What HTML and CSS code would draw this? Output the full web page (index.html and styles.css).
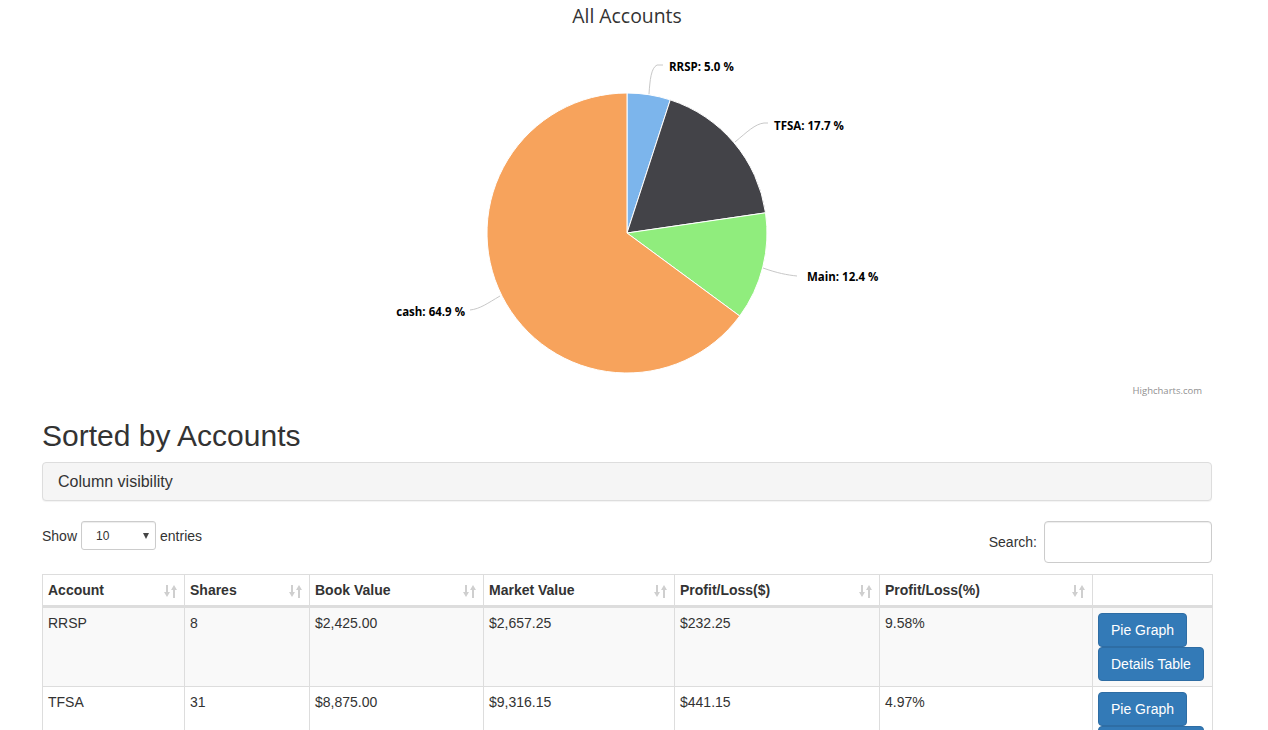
FILE: index.html
```html
<!DOCTYPE html>
<html>
<head>
<meta charset="utf-8">
<link rel="stylesheet" href="styles.css">
</head>
<body>
<div class="wrap">
  <div class="chart">
    <svg width="1170" height="400" viewBox="0 0 1170 400">
      <text class="c-title" x="585" y="23" text-anchor="middle">All Accounts</text>
      <g stroke="#ffffff" stroke-width="1" stroke-linejoin="round">
        <path d="M585 93 A140 140 0 0 1 628.26 99.86 L585 233 Z" fill="#7cb5ec"/>
        <path d="M628.26 99.86 A140 140 0 0 1 723.54 212.84 L585 233 Z" fill="#434348"/>
        <path d="M723.54 212.84 A140 140 0 0 1 697.73 316.02 L585 233 Z" fill="#90ed7d"/>
        <path d="M697.73 316.02 A140 140 0 1 1 585 93 L585 233 Z" fill="#f7a35c"/>
      </g>
      <g fill="none" stroke="#c8c8c8" stroke-width="1">
        <path d="M607 94 C608 80 609 68 615 65 L621 65"/>
        <path d="M693 142 C705 132 713 124 722 123 L726 123"/>
        <path d="M721 268 C735 273 745 275 755 276"/>
        <path d="M458 296 C446 303 438 309 428 310"/>
      </g>
      <g class="c-label">
        <text x="627" y="71">RRSP: 5.0 %</text>
        <text x="732" y="130">TFSA: 17.7 %</text>
        <text x="765" y="281">Main: 12.4 %</text>
        <text x="423" y="316" text-anchor="end">cash: 64.9 %</text>
      </g>
      <text class="c-credit" x="1160" y="394" text-anchor="end">Highcharts.com</text>
    </svg>
  </div>

  <h2 class="heading">Sorted by Accounts</h2>

  <div class="panel">Column visibility</div>

  <div class="controls">
    <div class="length">
      <span>Show</span>
      <div class="select"><span class="sel-val">10</span><span class="caret"></span></div>
      <span>entries</span>
    </div>
    <div class="search">
      <span>Search:</span>
      <div class="input"></div>
    </div>
  </div>

  <table class="grid">
    <colgroup>
      <col class="w1"><col class="w2"><col class="w3"><col class="w4"><col class="w5"><col class="w6"><col class="w7">
    </colgroup>
    <thead>
      <tr>
        <th>Account<svg class="sort" width="13" height="14" viewBox="0 0 13 14"><rect x="2" y="1" width="2" height="8"/><polygon points="0,8 6,8 3,13"/><polygon points="7,6 13,6 10,1"/><rect x="9" y="6" width="2" height="8"/></svg></th>
        <th>Shares<svg class="sort" width="13" height="14" viewBox="0 0 13 14"><rect x="2" y="1" width="2" height="8"/><polygon points="0,8 6,8 3,13"/><polygon points="7,6 13,6 10,1"/><rect x="9" y="6" width="2" height="8"/></svg></th>
        <th>Book Value<svg class="sort" width="13" height="14" viewBox="0 0 13 14"><rect x="2" y="1" width="2" height="8"/><polygon points="0,8 6,8 3,13"/><polygon points="7,6 13,6 10,1"/><rect x="9" y="6" width="2" height="8"/></svg></th>
        <th>Market Value<svg class="sort" width="13" height="14" viewBox="0 0 13 14"><rect x="2" y="1" width="2" height="8"/><polygon points="0,8 6,8 3,13"/><polygon points="7,6 13,6 10,1"/><rect x="9" y="6" width="2" height="8"/></svg></th>
        <th>Profit/Loss($)<svg class="sort" width="13" height="14" viewBox="0 0 13 14"><rect x="2" y="1" width="2" height="8"/><polygon points="0,8 6,8 3,13"/><polygon points="7,6 13,6 10,1"/><rect x="9" y="6" width="2" height="8"/></svg></th>
        <th>Profit/Loss(%)<svg class="sort" width="13" height="14" viewBox="0 0 13 14"><rect x="2" y="1" width="2" height="8"/><polygon points="0,8 6,8 3,13"/><polygon points="7,6 13,6 10,1"/><rect x="9" y="6" width="2" height="8"/></svg></th>
        <th></th>
      </tr>
    </thead>
    <tbody>
      <tr class="odd">
        <td>RRSP</td>
        <td>8</td>
        <td>$2,425.00</td>
        <td>$2,657.25</td>
        <td>$232.25</td>
        <td>9.58%</td>
        <td><div class="btns"><span class="btn">Pie Graph</span><span class="btn">Details Table</span></div></td>
      </tr>
      <tr>
        <td>TFSA</td>
        <td>31</td>
        <td>$8,875.00</td>
        <td>$9,316.15</td>
        <td>$441.15</td>
        <td>4.97%</td>
        <td><div class="btns"><span class="btn">Pie Graph</span><span class="btn">Details Table</span></div></td>
      </tr>
    </tbody>
  </table>
</div>
</body>
</html>
```

FILE: styles.css
```css
html, body {
  margin: 0;
  padding: 0;
  background: #ffffff;
}
body {
  font-family: "Liberation Sans", Arial, sans-serif;
  font-size: 14px;
  line-height: 20px;
  color: #333333;
  overflow: hidden;
}
.wrap {
  margin-left: 42px;
  width: 1170px;
}
.chart svg {
  display: block;
}
.c-title {
  font-family: "Open Sans", "DejaVu Sans", sans-serif;
  font-size: 19.4px;
  fill: #333333;
}
.c-label text {
  font-family: "Open Sans", "DejaVu Sans", sans-serif;
  font-size: 11.5px;
  font-weight: bold;
  fill: #000000;
}
.c-credit {
  font-family: "Open Sans", "DejaVu Sans", sans-serif;
  font-size: 9.5px;
  fill: #909090;
}
.heading {
  margin: 19px 0 10px;
  font-size: 30px;
  font-weight: 500;
  line-height: 33px;
}
.panel {
  background: #f5f5f5;
  border: 1px solid #dddddd;
  border-radius: 4px;
  padding: 10px 15px;
  font-size: 16px;
  line-height: 17px;
  margin-bottom: 20px;
  box-shadow: 0 1px 1px rgba(0,0,0,0.05);
}
.controls {
  display: flex;
  justify-content: space-between;
  align-items: flex-start;
  margin-bottom: 11px;
}
.length {
  display: flex;
  align-items: center;
  gap: 4px;
  height: 29px;
}
.select {
  width: 75px;
  height: 29px;
  box-sizing: border-box;
  border: 1px solid #cccccc;
  border-radius: 3px;
  display: flex;
  align-items: center;
  justify-content: space-between;
  padding: 0 6px 0 14px;
  font-size: 12px;
  box-shadow: inset 0 1px 1px rgba(0,0,0,0.075);
}
.caret {
  width: 0;
  height: 0;
  border-left: 3.5px solid transparent;
  border-right: 3.5px solid transparent;
  border-top: 6px solid #444444;
}
.search {
  display: flex;
  align-items: center;
  gap: 7px;
  height: 42px;
}
.input {
  width: 168px;
  height: 42px;
  box-sizing: border-box;
  border: 1px solid #cccccc;
  border-radius: 4px;
  box-shadow: inset 0 1px 1px rgba(0,0,0,0.075);
}
.grid {
  width: 1170px;
  table-layout: fixed;
  border-collapse: collapse;
  border: 1px solid #dddddd;
}
.w1 { width: 142px; }
.w2 { width: 125px; }
.w3 { width: 174px; }
.w4 { width: 191px; }
.w5 { width: 205px; }
.w6 { width: 213px; }
.w7 { width: 120px; }
.grid th,
.grid td {
  border: 1px solid #dddddd;
  padding: 5px;
  text-align: left;
  vertical-align: top;
  line-height: 20px;
}
.grid th {
  position: relative;
  font-weight: bold;
  border-bottom: 3px solid #dddddd;
  border-top: 1px solid #dddddd;
}
.sort {
  position: absolute;
  right: 7px;
  top: 9px;
  fill: #cfcfcf;
}
.grid tr.odd td {
  background: #f9f9f9;
}
.btns {
  display: flex;
  flex-direction: column;
  align-items: flex-start;
}
.btn {
  display: inline-block;
  background: #337ab7;
  border: 1px solid #2e6da4;
  color: #ffffff;
  padding: 6px 12px;
  font-size: 14px;
  line-height: 20px;
  border-radius: 4px;
  white-space: nowrap;
}
```
